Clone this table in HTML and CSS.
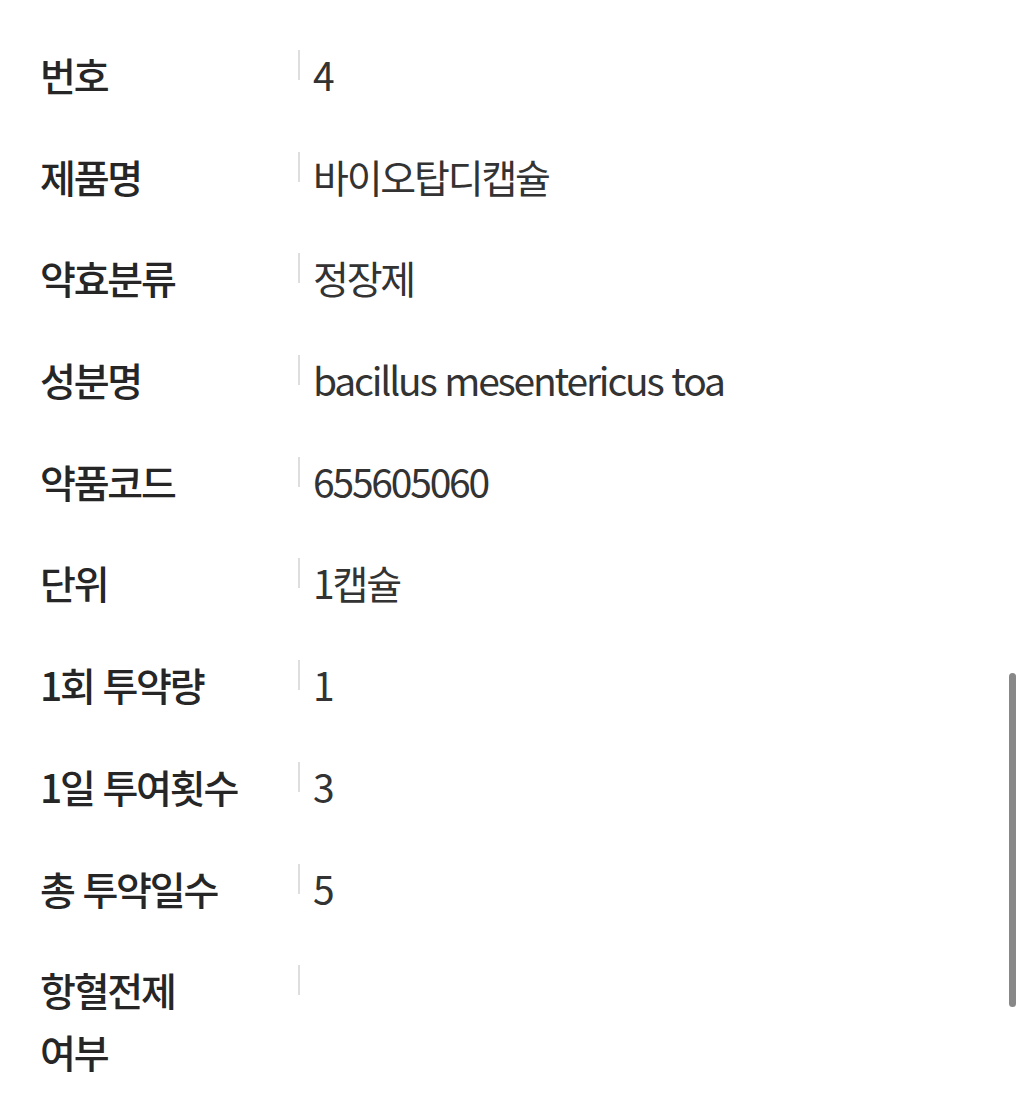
FILE: index.html
```html
<!DOCTYPE html>
<html lang="ko">
<head>
<meta charset="utf-8">
<link rel="stylesheet" href="styles.css">
</head>
<body>
<div class="list">
  <div class="row"><div class="label">번호</div><div class="value"><span class="bar"></span><span class="text">4</span></div></div>
  <div class="row"><div class="label">제품명</div><div class="value"><span class="bar"></span><span class="text">바이오탑디캡슐</span></div></div>
  <div class="row"><div class="label">약효분류</div><div class="value"><span class="bar"></span><span class="text">정장제</span></div></div>
  <div class="row"><div class="label">성분명</div><div class="value"><span class="bar"></span><span class="text">bacillus mesentericus toa</span></div></div>
  <div class="row"><div class="label">약품코드</div><div class="value"><span class="bar"></span><span class="text">655605060</span></div></div>
  <div class="row"><div class="label">단위</div><div class="value"><span class="bar"></span><span class="text">1캡슐</span></div></div>
  <div class="row"><div class="label">1회 투약량</div><div class="value"><span class="bar"></span><span class="text">1</span></div></div>
  <div class="row"><div class="label">1일 투여횟수</div><div class="value"><span class="bar"></span><span class="text">3</span></div></div>
  <div class="row"><div class="label">총 투약일수</div><div class="value"><span class="bar"></span><span class="text">5</span></div></div>
  <div class="row"><div class="label">항혈전제 여부</div><div class="value"><span class="bar"></span><span class="text"></span></div></div>
</div>
<div class="scrollbar"></div>
</body>
</html>
```
FILE: styles.css
```css
html, body {
  margin: 0;
  padding: 0;
  background: #fff;
  height: 100%;
  overflow: hidden;
}
body {
  font-family: "Noto Sans CJK KR", "Noto Sans", sans-serif;
  font-size: 39px;
  line-height: 62px;
  letter-spacing: -2.2px;
  color: #333;
}
.list {
  padding: 43px 0 0 40px;
  display: flex;
  flex-direction: column;
  gap: 39.7px;
}
.row {
  display: flex;
  align-items: flex-start;
}
.label {
  width: 204px;
  margin-right: 54px;
  font-weight: 500;
  color: #262626;
  flex-shrink: 0;
  word-break: keep-all;
}
.value {
  display: flex;
  align-items: flex-start;
}
.bar {
  width: 2px;
  height: 30px;
  margin-top: 7px;
  background: #dedede;
  margin-right: 13px;
  flex-shrink: 0;
}
.text {
  font-weight: 400;
  color: #333;
}
.scrollbar {
  position: fixed;
  left: 1009px;
  top: 673px;
  width: 7px;
  height: 334px;
  border-radius: 4px;
  background: #888;
}
```
